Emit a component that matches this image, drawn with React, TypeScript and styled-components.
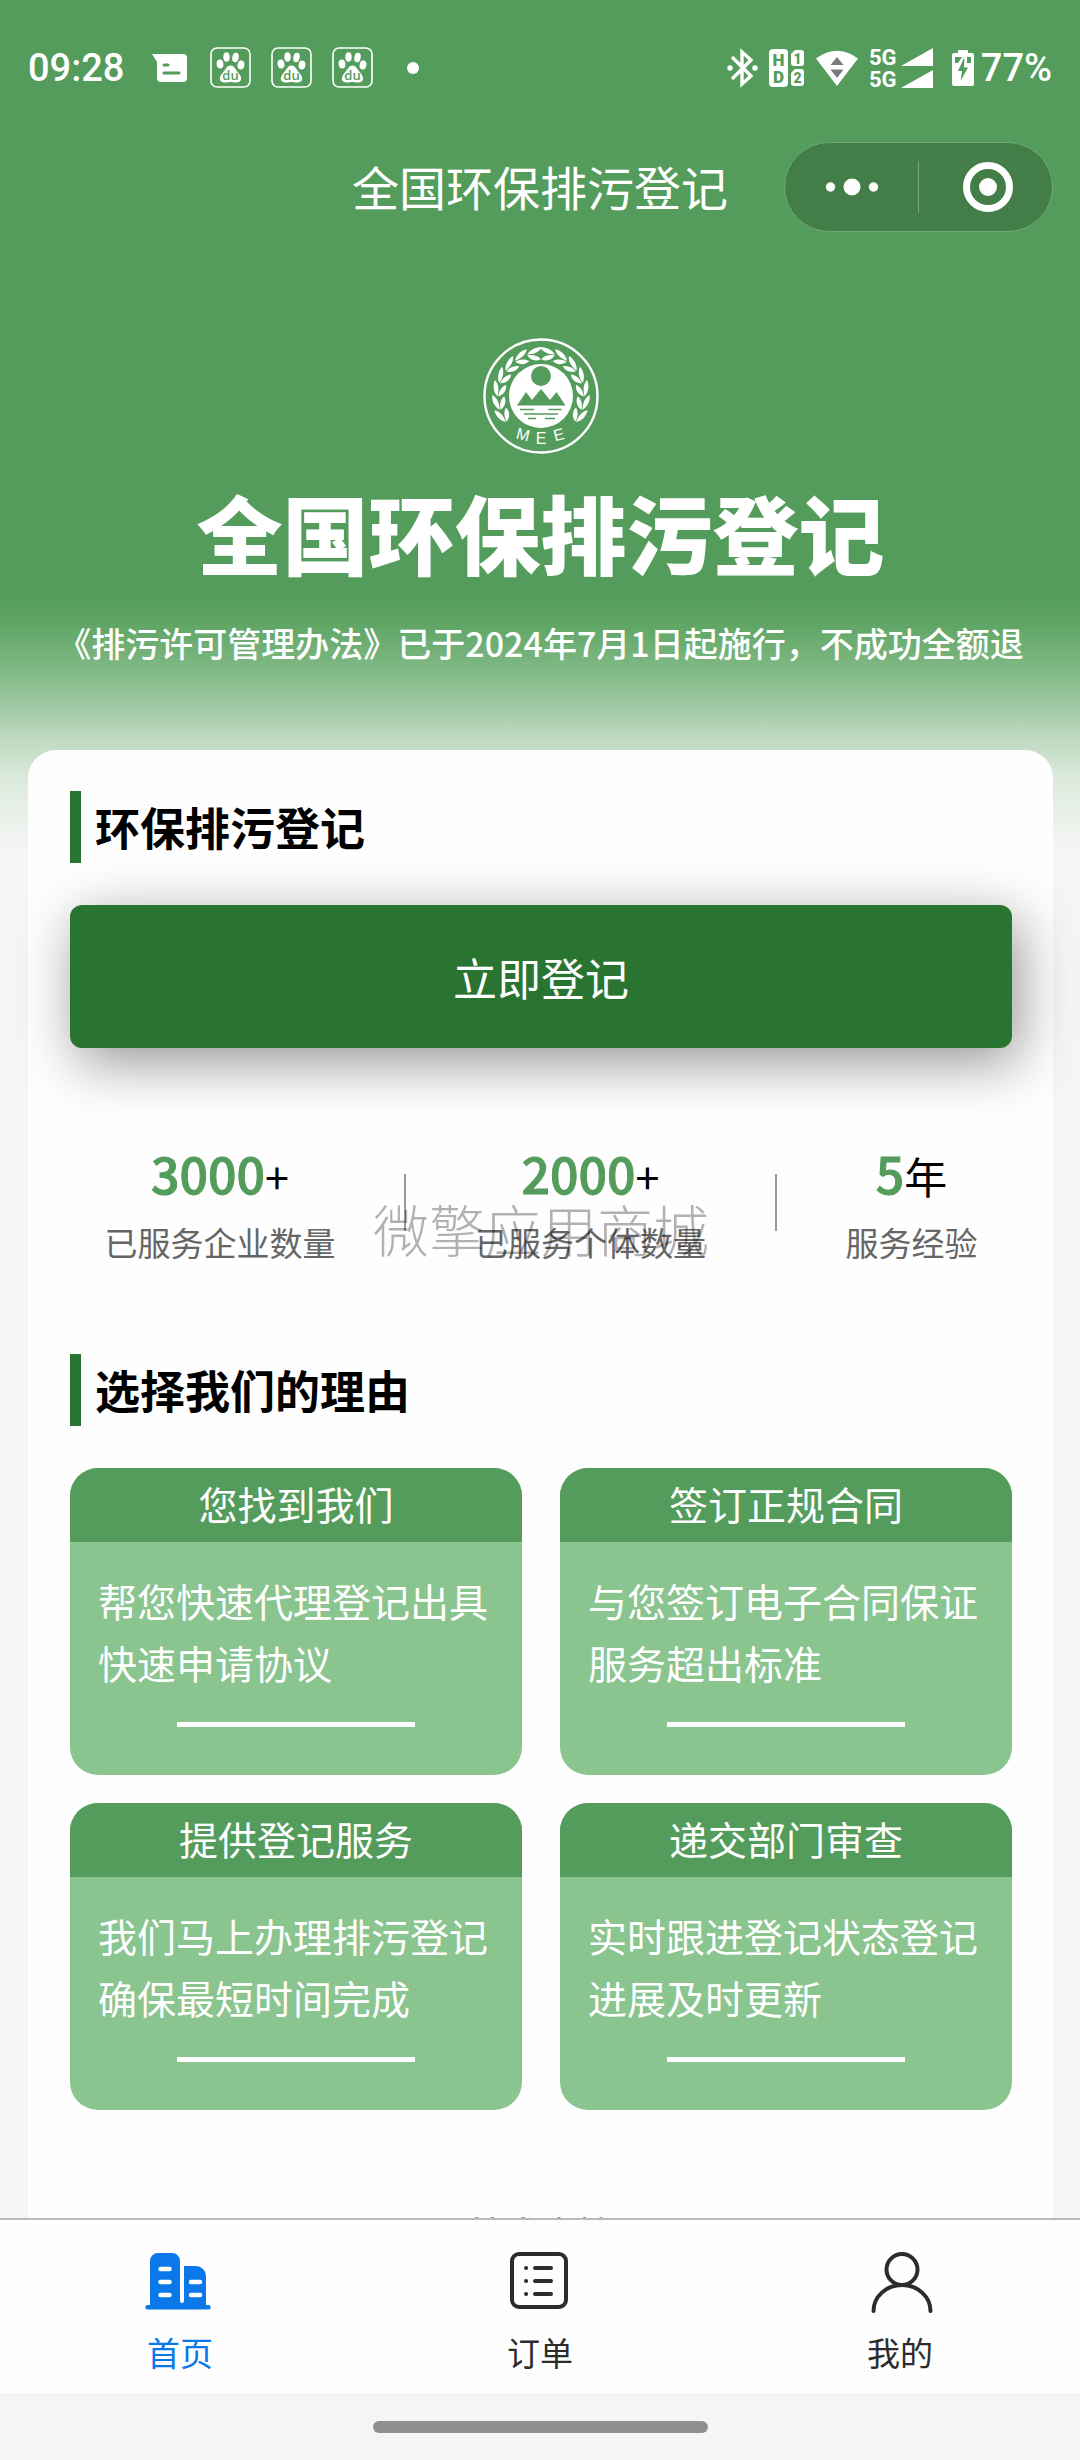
import React from "react";
import styled, { createGlobalStyle } from "styled-components";

const color = {
  leaf: "#549c5b",
  pale: "#8ac48f",
  forest: "#2a7432",
  page: "#f5f5f5",
  ink: "#2c2c2c",
  blue: "#0b78ea",
};

const GlobalStyle = createGlobalStyle`
  * { box-sizing: border-box; }
  body {
    margin: 0;
    background: ${color.page};
    font-family: "Noto Sans CJK SC", "Noto Sans", sans-serif;
    color: #000;
  }
  h1, h2, h3, p, dl, dt, dd { margin: 0; }
  button { border: 0; padding: 0; font: inherit; cursor: pointer; }
  svg { display: block; flex: none; overflow: visible; }
`;

const Screen = styled.div`
  height: 100vh;
  display: flex;
  flex-direction: column;
  background: linear-gradient(
      ${color.leaf} 590px,
      #60a665 625px,
      #85bb89 676px,
      #bfdac1 740px,
      #dcebdd 780px,
      ${color.page} 850px
    )
    ${color.page};
`;

const StatusBar = styled.div`
  display: flex;
  align-items: center;
  justify-content: space-between;
  height: 135px;
  padding: 0 28px;
  color: #fff;
  font-family: Roboto, sans-serif;
  font-size: 38px;
  font-weight: 500;
`;

const StatusGroup = styled.div<{ $gap: number }>`
  display: flex;
  align-items: center;
  gap: ${(p) => p.$gap}px;
`;

const Notices = styled(StatusGroup)`
  margin-left: 8px;
`;

const More = styled(StatusGroup)`
  margin-left: 14px;
`;

const Power = styled(StatusGroup)`
  margin-left: 8px;
`;

const NavBar = styled.header`
  display: grid;
  grid-template-columns: 1fr auto 1fr;
  align-items: center;
  height: 104px;
  padding: 0 27px;
`;

const NavTitle = styled.div`
  grid-column: 2;
  padding-bottom: 2px;
  color: #fff;
  font-size: 47px;
  line-height: 60px;
`;

const Capsule = styled.div`
  justify-self: end;
  display: flex;
  align-items: center;
  width: 269px;
  height: 90px;
  border: 1px solid #6fa973;
  border-radius: 45px;
  background: #437d47;
`;

const CapsuleButton = styled.button`
  flex: 1;
  display: flex;
  justify-content: center;
  background: none;
`;

const CapsuleRule = styled.span`
  width: 1px;
  height: 52px;
  background: #76a879;
`;

const Content = styled.main`
  flex: 1;
  min-height: 0;
  overflow-y: auto;
  scrollbar-width: none;
  padding: 0 27px 0 28px;
`;

const Hero = styled.section`
  display: flex;
  flex-direction: column;
  align-items: center;
  height: 511px;
  padding-top: 99px;
  color: #fff;
`;

const HeroTitle = styled.h1`
  margin-top: 22px;
  font-size: 86px;
  line-height: 112px;
  font-weight: 900;
  white-space: nowrap;
`;

const HeroNote = styled.p`
  margin-top: 30px;
  font-size: 34px;
  line-height: 50px;
  font-weight: 500;
  white-space: nowrap;
`;

const Sheet = styled.div`
  display: flex;
  flex-direction: column;
  padding: 41px 41px 60px 42px;
  border-radius: 28px 28px 0 0;
  background: #fefefe;
`;

const SectionTitle = styled.h2`
  padding-left: 14px;
  border-left: 11px solid ${color.forest};
  font-size: 45px;
  line-height: 72px;
  font-weight: 700;
`;

const PrimaryButton = styled.button`
  height: 143px;
  margin-top: 42px;
  border-radius: 12px;
  background: ${color.forest};
  box-shadow: 7px 14px 56px rgba(0, 0, 0, 0.42);
  color: #fff;
  font-size: 44px;
`;

const Stats = styled.div`
  position: relative;
  display: flex;
  align-items: center;
  justify-content: space-around;
  margin: 88px 0 84px;
`;

const Stat = styled.dl`
  display: flex;
  flex-direction: column-reverse;
  align-items: center;
`;

const StatLabel = styled.dt`
  color: #666;
  font-size: 33px;
  line-height: 56px;
`;

const StatValue = styled.dd`
  font-size: 43px;
  line-height: 78px;
`;

const StatNumber = styled.strong`
  color: ${color.leaf};
  font-size: 50px;
  line-height: 50px;
  font-weight: 500;
  -webkit-text-stroke: 1px ${color.leaf};
`;

const StatRule = styled.span`
  width: 2px;
  height: 57px;
  margin-bottom: 2px;
  background: #999;
`;

const Watermark = styled.span`
  position: absolute;
  top: 69%;
  left: 50%;
  transform: translate(-50%, -50%);
  color: rgba(0, 0, 0, 0.3);
  font-size: 56px;
  line-height: 56px;
  font-weight: 300;
  white-space: nowrap;
  pointer-events: none;
`;

const Reasons = styled.div`
  display: grid;
  grid-template-columns: 1fr 1fr;
  gap: 28px 38px;
  margin-top: 42px;
`;

const Reason = styled.article`
  display: flex;
  flex-direction: column;
  overflow: hidden;
  border-radius: 28px;
  background: ${color.pale};
  color: #fff;
  font-size: 39px;
`;

const ReasonTitle = styled.h3`
  padding-bottom: 4px;
  background: ${color.leaf};
  font-size: 39px;
  line-height: 70px;
  font-weight: 400;
  text-align: center;
`;

const ReasonText = styled.p`
  padding: 27px 28px 29px;
  line-height: 62px;
`;

const ReasonRule = styled.span`
  align-self: center;
  width: 238px;
  height: 5px;
  margin-bottom: 48px;
  background: #fff;
`;

const Credit = styled.p`
  margin-top: 97px;
  color: #888;
  font-size: 36px;
  line-height: 50px;
  text-align: center;
`;

const TabBar = styled.nav`
  display: grid;
  grid-template-columns: repeat(3, 1fr);
  height: 175px;
  border-top: 2px solid #bbb;
  background: #fefefe;
`;

const Tab = styled.a<{ $active?: boolean }>`
  display: flex;
  flex-direction: column;
  align-items: center;
  gap: 15px;
  padding-top: 31px;
  color: ${(p) => (p.$active ? color.blue : color.ink)};
  font-size: 33px;
  line-height: 48px;
  text-decoration: none;
`;

const GestureArea = styled.div`
  display: flex;
  align-items: center;
  justify-content: center;
  height: 67px;
  background: ${color.page};
`;

const GesturePill = styled.span`
  width: 335px;
  height: 12px;
  border-radius: 6px;
  background: #8f8f8f;
`;

function MessageIcon() {
  return (
    <svg width="38" height="30" viewBox="0 0 38 30" aria-hidden="true">
      <path d="M0 1H31a4 4 0 0 1 4 4V25a4 4 0 0 1-4 4H9a4 4 0 0 1-4-4V9Z" fill="#fff" />
      <path d="M12 12H16M12 20H27" stroke={color.leaf} strokeWidth="3" strokeLinecap="round" />
    </svg>
  );
}

function PawIcon() {
  return (
    <svg width="41" height="41" viewBox="0 0 41 41" aria-hidden="true">
      <rect x="1" y="1" width="39" height="39" rx="6" fill="none" stroke="#fff" strokeWidth="1.6" />
      <g fill="#fff">
        <ellipse cx="10" cy="17" rx="3.4" ry="4.6" transform="rotate(-8 10 17)" />
        <ellipse cx="16.5" cy="10" rx="3.2" ry="4.8" />
        <ellipse cx="25.5" cy="10.5" rx="3.2" ry="4.8" transform="rotate(10 25.5 10.5)" />
        <ellipse cx="31" cy="18" rx="3.4" ry="4.6" transform="rotate(8 31 18)" />
        <path d="M20.5 18.5c4 0 5 4.5 8 7.5 3.5 3.5 4 9-1.5 9.5-3 .3-4-.6-6.5-.6s-3.5.9-6.5.6C8.5 35 9 29.5 12.5 26c3-3 4-7.5 8-7.5Z" />
      </g>
      <text x="20.5" y="32.5" textAnchor="middle" fontFamily="Open Sans, sans-serif" fontSize="13" fontWeight="600" fill={color.leaf}>du</text>
    </svg>
  );
}

function DotIcon() {
  return (
    <svg width="12" height="12" viewBox="0 0 12 12" aria-hidden="true">
      <circle cx="6" cy="6" r="6" fill="#fff" />
    </svg>
  );
}

function BluetoothIcon() {
  return (
    <svg width="31" height="38" viewBox="0 0 31 38" aria-hidden="true">
      <path d="M5 8 24 27 15 35V3L24 11 5 30" fill="none" stroke="#fff" strokeWidth="3.4" strokeLinejoin="miter" />
      <circle cx="3" cy="19" r="2.7" fill="#fff" />
      <circle cx="28" cy="19" r="2.7" fill="#fff" />
    </svg>
  );
}

function VolteIcon() {
  const label = { fontFamily: "Roboto, sans-serif", fontWeight: 900, textAnchor: "middle" as const, fill: color.leaf };
  return (
    <svg width="36" height="38" viewBox="0 0 36 38" aria-hidden="true">
      <rect x="0" y="0" width="19" height="38" rx="4" fill="#fff" />
      <path d="M26 1h6a3 3 0 0 1 3 3v10a3 3 0 0 1-3 3h-7a3 3 0 0 1-3-3V5Z" fill="#fff" />
      <path d="M26 20h6a3 3 0 0 1 3 3v11a3 3 0 0 1-3 3h-7a3 3 0 0 1-3-3V24Z" fill="#fff" />
      <g {...label}>
        <text x="9.5" y="16.5" fontSize="17">H</text>
        <text x="9.5" y="34" fontSize="17">D</text>
        <text x="28.5" y="14.5" fontSize="14">1</text>
        <text x="28.5" y="34" fontSize="14">2</text>
      </g>
    </svg>
  );
}

function WifiIcon() {
  return (
    <svg width="42" height="36" viewBox="0 0 42 36" aria-hidden="true">
      <path d="M0 8.5Q21-7 42 8.5L21 36Z" fill="#fff" />
      <path d="M14.5 15 21 7l6.5 8ZM14.5 19.5h13L21 28Z" fill="#777d78" />
    </svg>
  );
}

function SignalIcon() {
  return (
    <svg width="64" height="42" viewBox="0 0 64 42" aria-hidden="true">
      <g fill="#fff" fontFamily="Roboto, sans-serif" fontSize="22" fontWeight="700">
        <text x="0" y="18">5G</text>
        <text x="0" y="40">5G</text>
      </g>
      <path d="M32 19 64 1V19ZM32 41 64 23V41Z" fill="#fff" />
    </svg>
  );
}

function BatteryIcon() {
  return (
    <svg width="22" height="38" viewBox="0 0 22 38" aria-hidden="true">
      <path d="M6 1h10v3h4a2 2 0 0 1 2 2v29a2 2 0 0 1-2 2H2a2 2 0 0 1-2-2V6a2 2 0 0 1 2-2h4Z" fill="#fff" />
      <path d="M3 8h7L6 14H3ZM15 8h4v6h-4Z" fill={color.leaf} />
      <path d="M12.5 8 6 22h4L8.5 32 16 18.5h-4Z" fill={color.leaf} />
    </svg>
  );
}

function MoreIcon() {
  return (
    <svg width="54" height="20" viewBox="0 0 54 20" fill="#fff" aria-hidden="true">
      <circle cx="5.5" cy="10" r="4.7" />
      <circle cx="27" cy="10" r="8.5" />
      <circle cx="48.5" cy="10" r="4.7" />
    </svg>
  );
}

function CloseIcon() {
  return (
    <svg width="50" height="50" viewBox="0 0 50 50" aria-hidden="true">
      <circle cx="27" cy="25" r="21.5" fill="none" stroke="#fff" strokeWidth="7" />
      <circle cx="27" cy="25" r="9" fill="#fff" />
    </svg>
  );
}

const branchAngles = [12, 30, 48, 66, 84, 102, 120];

function Branch() {
  return (
    <g>
      {branchAngles.map((a) => (
        <g key={a} transform={`rotate(${a} 58 58)`} fill="#fff">
          <path d="M63 14.5C58 9.5 52 9 47 10.5c3.5 4 9 5.5 16 4Z" />
          <path d="M63 15.5c-5 0-10 2-12.5 6.5 5.5 1.5 10.5-1.5 12.5-6.5Z" />
        </g>
      ))}
    </g>
  );
}

function Emblem() {
  return (
    <svg width="116" height="116" viewBox="0 0 116 116" role="img" aria-label="MEE">
      <circle cx="58" cy="58" r="56.5" fill="none" stroke="#fff" strokeWidth="2.4" />
      <Branch />
      <g transform="matrix(-1 0 0 1 116 0)">
        <Branch />
      </g>
      <circle cx="58" cy="58" r="32" fill="#fff" />
      <circle cx="58" cy="38" r="10" fill={color.leaf} />
      <path d="M34 67.5 43 54l6 8 9-11 9 11 6.5-8L82.5 67.5Z" fill={color.leaf} />
      <path d="M37 71.5H51M65.5 71.5H78.5M41 76H75M45 80.5H53M62 80.5H72" stroke={color.leaf} strokeWidth="1.5" />
      <g fill="#fff" fontFamily="Liberation Sans, sans-serif" fontSize="16" textAnchor="middle">
        <text x="40" y="102" transform="rotate(14 40 97)">M</text>
        <text x="58" y="106">E</text>
        <text x="76" y="102" transform="rotate(-14 76 97)">E</text>
      </g>
    </svg>
  );
}

function HomeIcon() {
  return (
    <svg width="66" height="62" viewBox="2 0 66 62" aria-hidden="true">
      <path d="M5 54V10A8 8 0 0 1 13 2H27a8 8 0 0 1 8 8V50a2 2 0 0 0 4 0V15H51A10 10 0 0 1 61 25V54h2.5a2.2 2.2 0 0 1 0 4.4H2.5a2.2 2.2 0 0 1 0-4.4Z" fill="currentColor" />
      <path d="M15.5 18H24.5M15.5 31H24.5M15.5 44H24.5M46 31H55M46 44H55" stroke="#fff" strokeWidth="4.5" strokeLinecap="round" />
    </svg>
  );
}

function OrderIcon() {
  return (
    <svg width="60" height="62" viewBox="1 0 60 62" aria-hidden="true">
      <g fill="none" stroke="currentColor" strokeWidth="4" strokeLinecap="round">
        <rect x="3" y="3" width="54" height="53" rx="7" />
        <path d="M26 17H42M26 30H42M26 43H42" />
        <path d="M17 17h.1M17 30h.1M17 43h.1" />
      </g>
    </svg>
  );
}

function PersonIcon() {
  return (
    <svg width="62" height="62" viewBox="-2 0 62 62" aria-hidden="true">
      <g fill="none" stroke="currentColor" strokeWidth="4" strokeLinecap="round">
        <circle cx="31" cy="18.5" r="15.5" />
        <path d="M2.5 60A28.5 26 0 0 1 59.5 60" />
      </g>
    </svg>
  );
}

const stats = [
  { value: "3000", unit: "+", label: "已服务企业数量" },
  { value: "2000", unit: "+", label: "已服务个体数量" },
  { value: "5", unit: "年", label: "服务经验" },
];

const reasons = [
  { title: "您找到我们", text: "帮您快速代理登记出具快速申请协议" },
  { title: "签订正规合同", text: "与您签订电子合同保证服务超出标准" },
  { title: "提供登记服务", text: "我们马上办理排污登记确保最短时间完成" },
  { title: "递交部门审查", text: "实时跟进登记状态登记进展及时更新" },
];

const tabs = [
  { label: "首页", Icon: HomeIcon, active: true },
  { label: "订单", Icon: OrderIcon, active: false },
  { label: "我的", Icon: PersonIcon, active: false },
];

export default function App() {
  return (
    <>
      <GlobalStyle />
      <Screen>
        <StatusBar>
          <StatusGroup $gap={20}>
            <span>09:28</span>
            <Notices $gap={20}>
              <MessageIcon />
              <PawIcon />
              <PawIcon />
              <PawIcon />
            </Notices>
            <More $gap={20}>
              <DotIcon />
            </More>
          </StatusGroup>
          <StatusGroup $gap={11}>
            <BluetoothIcon />
            <VolteIcon />
            <WifiIcon />
            <SignalIcon />
            <Power $gap={7}>
              <BatteryIcon />
              <span>77%</span>
            </Power>
          </StatusGroup>
        </StatusBar>

        <NavBar>
          <NavTitle>全国环保排污登记</NavTitle>
          <Capsule>
            <CapsuleButton aria-label="更多">
              <MoreIcon />
            </CapsuleButton>
            <CapsuleRule />
            <CapsuleButton aria-label="关闭">
              <CloseIcon />
            </CapsuleButton>
          </Capsule>
        </NavBar>

        <Content>
          <Hero>
            <Emblem />
            <HeroTitle>全国环保排污登记</HeroTitle>
            <HeroNote>《排污许可管理办法》已于2024年7月1日起施行，不成功全额退</HeroNote>
          </Hero>

          <Sheet>
            <SectionTitle>环保排污登记</SectionTitle>
            <PrimaryButton>立即登记</PrimaryButton>

            <Stats>
              {stats.map((s, i) => (
                <React.Fragment key={s.label}>
                  {i > 0 && <StatRule />}
                  <Stat>
                    <StatLabel>{s.label}</StatLabel>
                    <StatValue>
                      <StatNumber>{s.value}</StatNumber>
                      {s.unit}
                    </StatValue>
                  </Stat>
                </React.Fragment>
              ))}
              <Watermark>微擎应用商城</Watermark>
            </Stats>

            <SectionTitle>选择我们的理由</SectionTitle>
            <Reasons>
              {reasons.map((r) => (
                <Reason key={r.title}>
                  <ReasonTitle>{r.title}</ReasonTitle>
                  <ReasonText>{r.text}</ReasonText>
                  <ReasonRule />
                </Reason>
              ))}
            </Reasons>

            <Credit>技术支持</Credit>
          </Sheet>
        </Content>

        <TabBar>
          {tabs.map(({ label, Icon, active }) => (
            <Tab key={label} href="#" $active={active}>
              <Icon />
              {label}
            </Tab>
          ))}
        </TabBar>
        <GestureArea>
          <GesturePill />
        </GestureArea>
      </Screen>
    </>
  );
}
